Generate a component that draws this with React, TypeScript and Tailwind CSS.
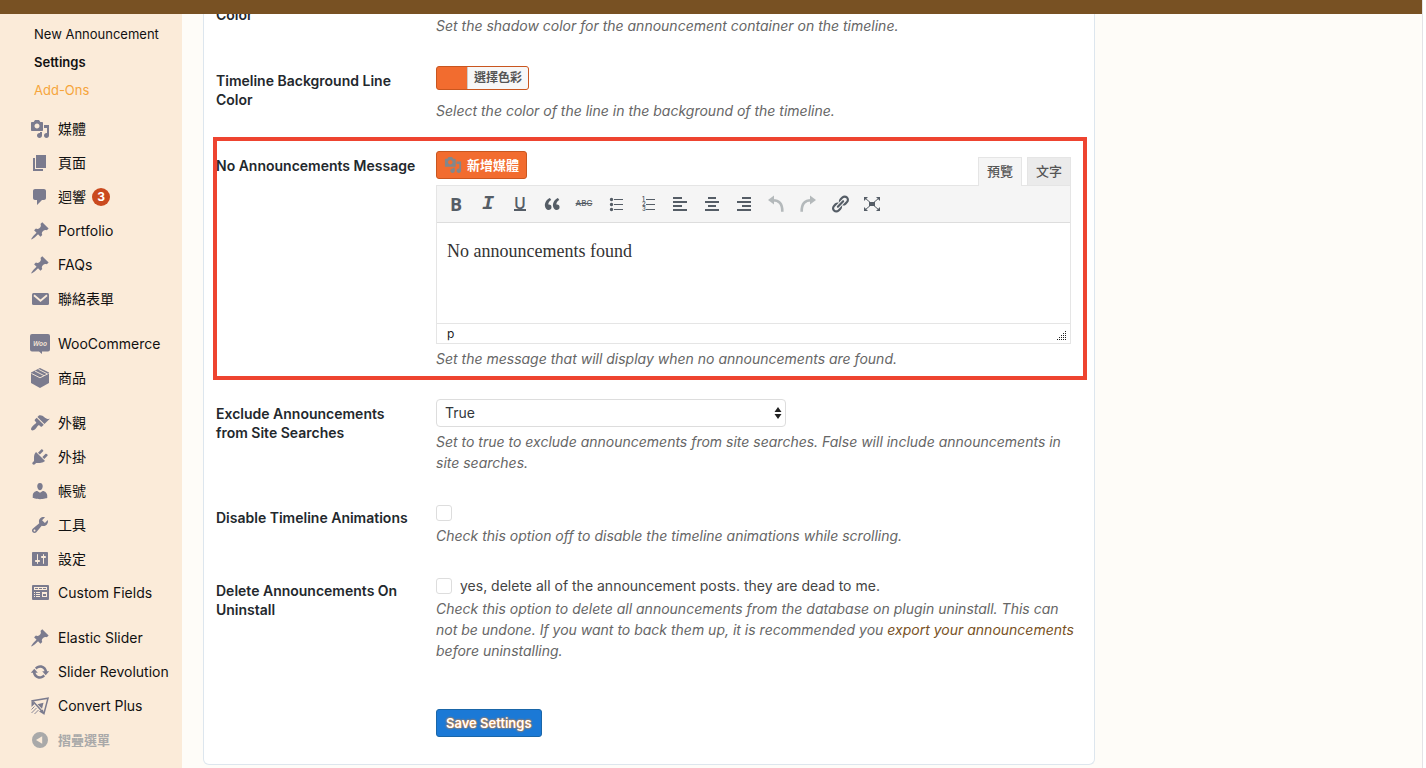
import { useState } from "react"
import type { ReactNode } from "react"

const icons = {
    media: "M13 11V4c0-.55-.45-1-1-1h-1.67L9 1H5L3.67 3H2c-.55 0-1 .45-1 1v7c0 .55.45 1 1 1h10c.55 0 1-.45 1-1zM7 4.5c1.38 0 2.5 1.12 2.5 2.5S8.38 9.5 7 9.5 4.5 8.38 4.5 7 5.62 4.5 7 4.5zM14 6h5v10.5c0 1.38-1.12 2.5-2.5 2.5S14 17.88 14 16.5s1.12-2.5 2.5-2.5c.17 0 .34.02.5.05V9h-3V6zm-4 8.05V13h2v3.5c0 1.38-1.12 2.5-2.5 2.5S7 17.88 7 16.5 8.12 14 9.5 14c.17 0 .34.02.5.05z",
    page: "M6 15V2h10v13H6zm-1 1h8v2H3V5h2v11z",
    comments: "M5 2h9c1.1 0 2 .9 2 2v7c0 1.1-.9 2-2 2h-2l-5 5v-5H5c-1.1 0-2-.9-2-2V4c0-1.1.9-2 2-2z",
    pin: "M10.44 3.02l1.82-1.82 6.36 6.35-1.83 1.82c-1.05-.68-2.48-.57-3.41.36l-.75.75c-.92.93-1.04 2.35-.35 3.41l-1.83 1.82-2.41-2.41-2.8 2.79c-.42.42-3.38 2.71-3.8 2.29s1.86-3.39 2.28-3.81l2.79-2.79L4.1 9.36l1.83-1.82c1.05.69 2.48.57 3.4-.36l.75-.75c.93-.92 1.05-2.35.36-3.41z",
    brush: "M14.48 11.06L7.41 3.99l1.5-1.5c.5-.56 2.3-.47 3.51.32 1.21.8 1.43 1.28 2.91 2.1 1.18.64 2.45 1.26 4.45.85zm-.71.71L6.7 4.7 4.93 6.47c-.39.39-.39 1.02 0 1.41l1.06 1.06c.39.39.39 1.03 0 1.42-.6.6-1.43 1.11-2.21 1.69-.35.26-.7.53-1.01.84C1.43 14.23.4 16.08 1.4 17.07c.99 1 2.84-.03 4.18-1.36.31-.31.58-.66.85-1.02.57-.78 1.08-1.61 1.69-2.21.39-.39 1.02-.39 1.41 0l1.06 1.06c.39.39 1.02.39 1.41 0z",
    plug: "M13.11 4.36L9.87 7.6 8 5.73l3.24-3.24c.35-.34 1.05-.2 1.56.32.52.51.66 1.21.31 1.55zm-8 1.77l.91-1.12 9.01 9.01-1.19.84c-.71.71-2.63 1.16-3.82 1.16H6.14L4.9 17.26c-.59.59-1.54.59-2.12 0-.59-.58-.59-1.53 0-2.12l1.24-1.24v-3.88c0-1.13.4-3.19 1.09-3.89zm7.26 3.97l3.24-3.24c.34-.35 1.04-.21 1.55.31.52.51.66 1.21.31 1.55l-3.24 3.25z",
    user: "M10 9.25c-2.27 0-2.73-3.44-2.73-3.44C7 4.02 7.82 2 9.97 2c2.16 0 2.98 2.02 2.71 3.81 0 0-.41 3.44-2.68 3.44zm0 2.57L12.72 10c2.39 0 4.52 2.33 4.52 4.53v2.49s-3.65 1.13-7.24 1.13c-3.65 0-7.24-1.13-7.24-1.13v-2.49c0-2.25 1.94-4.48 4.47-4.48z",
    wrench: "M16.68 9.77c-1.34 1.34-3.3 1.67-4.95.99l-5.41 6.52c-.99.99-2.59.99-3.58 0s-.99-2.59 0-3.57l6.52-5.42c-.68-1.65-.35-3.61.99-4.95 1.28-1.28 3.12-1.62 4.72-1.06l-2.89 2.89 2.82 2.82 2.86-2.87c.53 1.58.18 3.39-1.08 4.65zM3.81 16.21c.4.39 1.04.39 1.43 0 .4-.4.4-1.04 0-1.43-.39-.4-1.03-.4-1.43 0-.39.39-.39 1.03 0 1.43z",
    sliders: "M18 16V4c0-.55-.45-1-1-1H3c-.55 0-1 .45-1 1v12c0 .55.45 1 1 1h14c.55 0 1-.45 1-1zM8 11h1c.55 0 1 .45 1 1s-.45 1-1 1H8v1.5c0 .28-.22.5-.5.5s-.5-.22-.5-.5V13H6c-.55 0-1-.45-1-1s.45-1 1-1h1V5.5c0-.28.22-.5.5-.5s.5.22.5.5V11zm5-2h-1c-.55 0-1-.45-1-1s.45-1 1-1h1V5.5c0-.28.22-.5.5-.5s.5.22.5.5V7h1c.55 0 1 .45 1 1s-.45 1-1 1h-1v5.5c0 .28-.22.5-.5.5s-.5-.22-.5-.5V9z",
    update: "M10.2 3.28c3.53 0 6.43 2.61 6.92 6h2.08l-3.5 4-3.5-4h2.32c-.45-1.97-2.21-3.45-4.32-3.45-1.45 0-2.73.71-3.54 1.78L4.95 5.66C6.23 4.2 8.11 3.28 10.2 3.28zm-.4 13.44c-3.52 0-6.43-2.61-6.92-6H.8l3.5-4c1.17 1.33 2.33 2.67 3.5 4H5.48c.45 1.97 2.21 3.45 4.32 3.45 1.45 0 2.73-.71 3.54-1.78l1.71 1.95c-1.28 1.46-3.15 2.38-5.25 2.38z",
    quote: "M9.49 13.22c0-.74-.2-1.38-.61-1.9-.62-.78-1.83-.88-2.53-.72-.29-1.65 1.11-3.75 2.92-4.65L7.88 4c-2.73 1.3-5.42 4.28-4.96 8.05C3.21 14.43 4.59 16 6.54 16c.85 0 1.56-.25 2.12-.75s.83-1.18.83-2.03zm8.05 0c0-.74-.2-1.38-.61-1.9-.63-.78-1.83-.88-2.53-.72-.29-1.65 1.11-3.75 2.92-4.65L15.93 4c-2.73 1.3-5.41 4.28-4.95 8.05.29 2.38 1.66 3.95 3.61 3.95.85 0 1.56-.25 2.12-.75s.83-1.18.83-2.03z",
    link: "M17.74 2.76c1.68 1.69 1.68 4.41 0 6.1l-1.53 1.52c-1.12 1.12-2.7 1.47-4.14 1.09l2.62-2.61.76-.77.76-.76c.84-.84.84-2.2 0-3.04-.84-.85-2.2-.85-3.04 0l-.77.76-3.38 3.38c-.37-1.44-.02-3.02 1.1-4.14l1.52-1.53c1.69-1.68 4.42-1.68 6.1 0zM8.59 13.43l5.34-5.34c.42-.42.42-1.1 0-1.52-.44-.43-1.13-.39-1.53 0l-5.33 5.34c-.42.42-.42 1.1 0 1.52.44.43 1.13.39 1.52 0zm-.76 2.29l4.14-4.15c.38 1.44.03 3.02-1.09 4.14l-1.52 1.53c-1.69 1.68-4.41 1.68-6.1 0-1.68-1.68-1.68-4.42 0-6.1l1.53-1.52c1.12-1.12 2.7-1.47 4.14-1.1l-4.14 4.15c-.85.84-.85 2.2 0 3.05.84.84 2.2.84 3.04 0z",
    collapse: "M10 2a8 8 0 1 0 0 16 8 8 0 0 0 0-16zm2.2 4.2v7.6L6 10z",
    alignLeft: "M3 3h9v2H3zM3 7h14v2H3zM3 11h9v2H3zM3 15h14v2H3z",
    alignCenter: "M6 3h8v2H6zM3 7h14v2H3zM6 11h8v2H6zM3 15h14v2H3z",
    alignRight: "M8 3h9v2H8zM3 7h14v2H3zM8 11h9v2H8zM3 15h14v2H3z",
    list: "M5.500 3.800a1.700 1.700 0 1 1 0 3.400 1.700 1.700 0 0 1 0-3.400zM8 5h9v1H8zM5.500 8.800a1.700 1.700 0 1 1 0 3.400 1.700 1.700 0 0 1 0-3.400zM8 10h9v1H8zM5.500 13.800a1.700 1.700 0 1 1 0 3.400 1.700 1.700 0 0 1 0-3.400zM8 15h9v1H8z",
}

function Icon({ d, size = 20 }: { d: string; size?: number }) {
    return (
        <svg viewBox="0 0 20 20" width={size} height={size} fill="currentColor" className="shrink-0" aria-hidden="true">
            <path d={d} />
        </svg>
    )
}

function MailIcon() {
    return (
        <svg viewBox="0 0 20 20" width="20" height="20" className="shrink-0" aria-hidden="true">
            <rect x="2" y="4" width="17" height="12" rx="1.5" fill="currentColor" />
            <path d="M4 6.2l6.5 5.6L17 6.2" fill="none" stroke="#fbebd9" strokeWidth="1.8" />
        </svg>
    )
}

function WooIcon() {
    return (
        <svg viewBox="0 0 20 20" width="20" height="20" className="shrink-0" aria-hidden="true">
            <path d="M2 0h16a2 2 0 0 1 2 2v13.500a2 2 0 0 1-2 2h-6L12 20l-3-2.500H2a2 2 0 0 1-2-2V2a2 2 0 0 1 2-2z" fill="currentColor" />
            <text x="10" y="11.500" textAnchor="middle" fontSize="7" fontWeight="600" fontStyle="italic" fontFamily="Open Sans" fill="#fbebd9">Woo</text>
        </svg>
    )
}

function BoxIcon() {
    return (
        <svg viewBox="0 0 20 20" width="20" height="20" className="shrink-0" aria-hidden="true">
            <path d="M10 0l9 4.500V15l-9 5-9-5V4.500z" fill="currentColor" />
            <path d="M1.500 5.500L10 9.800l8.500-4.300M5 3l9 4.600M8.500 1.300l8.500 4.400" fill="none" stroke="#fbebd9" strokeWidth="0.900" />
        </svg>
    )
}

function FieldsIcon() {
    return (
        <svg viewBox="0 0 20 20" width="20" height="20" className="shrink-0" aria-hidden="true">
            <rect x="2" y="2" width="17" height="15" rx="1" fill="currentColor" />
            <path
                d="M4 4h13v3H4zM4 9h1v1H4zM6 9h4v1H6zM4 11h1v1H4zM6 11h4v1H6zM4 13h1v1H4zM6 13h4v1H6zM12 9h5v5h-5z"
                fill="#fbebd9"
            />
            <path d="M5 5h3v1H5zM9 5h3v1H9zM13 5h3v1h-3zM13 11h3v2h-3z" fill="currentColor" />
        </svg>
    )
}

function ConvertIcon() {
    return (
        <svg viewBox="0 0 20 20" width="20" height="20" fill="none" stroke="currentColor" className="shrink-0" aria-hidden="true">
            <path d="M2.500 4.800L18 2.200 14 17.500z" strokeWidth="1.500" />
            <path d="M7.500 8.200l6-1.500-1.500 6z" fill="currentColor" stroke="none" />
            <path d="M1.500 4.500v6.500l3-3zM9 15.500l5 3-1-5z" fill="currentColor" stroke="none" />
            <path d="M1.500 13.500l3-3M1.500 17l5-5M4.500 18l4-4" strokeWidth="0.900" />
        </svg>
    )
}

function HistoryIcon({ flip = false }: { flip?: boolean }) {
    return (
        <svg viewBox="0 0 20 20" width="20" height="20" className="text-[#b4b9bb]" aria-hidden="true">
            <g transform={flip ? "translate(20 0) scale(-1 1)" : undefined}>
                <path d="M2 6l6-4.500v9z" fill="currentColor" />
                <path d="M7 6.200c6 0 9.500 3.500 9.300 11.500" fill="none" stroke="currentColor" strokeWidth="2.600" />
            </g>
        </svg>
    )
}

function FullscreenIcon() {
    return (
        <svg viewBox="0 0 20 20" width="20" height="20" aria-hidden="true">
            <path d="M7 8h6v4H7zM2 3h4L2 7zM18 3v4l-4-4zM2 17v-4l4 4zM18 17h-4l4-4z" fill="currentColor" />
            <path d="M3 4l14 12M17 4L3 16" stroke="currentColor" strokeWidth="1" />
        </svg>
    )
}

function NumberedIcon() {
    return (
        <svg viewBox="0 0 20 20" width="20" height="20" fill="currentColor" aria-hidden="true">
            <path d="M8 5h9v1H8zM8 10h9v1H8zM8 15h9v1H8z" />
            <g fontSize="6" fontWeight="600" fontFamily="Inter">
                <text x="4" y="7">1</text>
                <text x="4" y="12">2</text>
                <text x="4" y="17">3</text>
            </g>
        </svg>
    )
}

const menuGroups: { label: string; icon: ReactNode; count?: number }[][] = [
    [
        { label: "媒體", icon: <Icon d={icons.media} /> },
        { label: "頁面", icon: <Icon d={icons.page} /> },
        { label: "迴響", icon: <Icon d={icons.comments} />, count: 3 },
        { label: "Portfolio", icon: <Icon d={icons.pin} /> },
        { label: "FAQs", icon: <Icon d={icons.pin} /> },
        { label: "聯絡表單", icon: <MailIcon /> },
    ],
    [
        { label: "WooCommerce", icon: <WooIcon /> },
        { label: "商品", icon: <BoxIcon /> },
    ],
    [
        { label: "外觀", icon: <Icon d={icons.brush} /> },
        { label: "外掛", icon: <Icon d={icons.plug} /> },
        { label: "帳號", icon: <Icon d={icons.user} /> },
        { label: "工具", icon: <Icon d={icons.wrench} /> },
        { label: "設定", icon: <Icon d={icons.sliders} /> },
        { label: "Custom Fields", icon: <FieldsIcon /> },
    ],
    [
        { label: "Elastic Slider", icon: <Icon d={icons.pin} /> },
        { label: "Slider Revolution", icon: <Icon d={icons.update} /> },
        { label: "Convert Plus", icon: <ConvertIcon /> },
    ],
]

const tools: { name: string; icon: ReactNode }[] = [
    { name: "Bold", icon: <span className="font-['Open_Sans'] text-lg font-bold">B</span> },
    { name: "Italic", icon: <span className="font-['Liberation_Mono'] text-xl font-bold italic">I</span> },
    { name: "Underline", icon: <span className="border-b-2 font-['Open_Sans'] text-base leading-3 font-semibold">U</span> },
    { name: "Blockquote", icon: <Icon d={icons.quote} /> },
    { name: "Strikethrough", icon: <span className="text-[8px] font-medium line-through">ABC</span> },
    { name: "Bulleted list", icon: <Icon d={icons.list} /> },
    { name: "Numbered list", icon: <NumberedIcon /> },
    { name: "Align left", icon: <Icon d={icons.alignLeft} /> },
    { name: "Align center", icon: <Icon d={icons.alignCenter} /> },
    { name: "Align right", icon: <Icon d={icons.alignRight} /> },
    { name: "Undo", icon: <HistoryIcon /> },
    { name: "Redo", icon: <HistoryIcon flip /> },
    { name: "Insert link", icon: <Icon d={icons.link} /> },
    { name: "Fullscreen", icon: <FullscreenIcon /> },
]

function Sidebar() {
    return (
        <nav className="w-[182px] shrink-0 bg-[#fbebd9] pt-5 text-sm text-[#111]">
            <ul className="mb-2 pl-[34px] text-[13px]">
                <li><a href="#new" className="block leading-7">New Announcement</a></li>
                <li><a href="#settings" className="block leading-7 font-semibold">Settings</a></li>
                <li><a href="#addons" className="block leading-7 text-[#f6a53b]">Add-Ons</a></li>
            </ul>
            {menuGroups.map((group, index) => (
                <ul key={index} className="mb-[11px] last-of-type:mb-0">
                    {group.map((item) => (
                        <li key={item.label}>
                            <a href="#menu" className="flex h-[34px] items-center gap-2 pl-[30px] whitespace-nowrap">
                                <span className="text-[#7b7b8e]">{item.icon}</span>
                                {item.label}
                                {item.count && (
                                    <span className="-ml-0.5 flex size-[18px] items-center justify-center rounded-full bg-[#ca4a1f] text-xs font-bold text-white">
                                        {item.count}
                                    </span>
                                )}
                            </a>
                        </li>
                    ))}
                </ul>
            ))}
            <button type="button" className="flex h-[34px] items-center gap-2 pl-[30px] text-[13px] font-bold text-[#a9a9a9]">
                <Icon d={icons.collapse} />
                摺疊選單
            </button>
        </nav>
    )
}

function Row({ label, htmlFor, marked, children }: { label: string; htmlFor: string; marked?: boolean; children: ReactNode }) {
    return (
        <div className="relative flex gap-5">
            <label htmlFor={htmlFor} className="w-[200px] shrink-0 py-5 leading-[19px] font-semibold text-[#23282d]">
                {label}
            </label>
            <div className="min-w-0 flex-1 py-[15px]">{children}</div>
            {marked && <div className="pointer-events-none absolute top-px -right-4 bottom-1 -left-[3px] border-4 border-[#ee4430]" />}
        </div>
    )
}

function Description({ children }: { children: ReactNode }) {
    return <p className="-mr-2 leading-[21px] text-[#666] italic">{children}</p>
}

function Editor() {
    const [message, setMessage] = useState("No announcements found")

    return (
        <div className="mb-1">
            <div className="flex h-[34px] items-end justify-between">
                <button type="button" className="flex h-7 items-center gap-[5px] self-start rounded-[3px] border border-[#c9561f] bg-[#f26c2f] px-[7px] text-[13px] font-bold text-white">
                    <span className="text-[#82878c]"><Icon d={icons.media} size={18} /></span>
                    新增媒體
                </button>
                <div className="flex items-end gap-[5px] text-[13px] font-medium text-[#555]">
                    <button type="button" className="relative -mb-px h-[29px] w-11 border border-b-0 border-[#e5e5e5] bg-[#f5f5f5] pb-0.5">預覽</button>
                    <button type="button" className="h-7 w-11 border border-b-0 border-[#e5e5e5] bg-[#ebebeb]">文字</button>
                </div>
            </div>
            <div className="border border-[#e5e5e5]">
                <div className="flex h-[37px] items-center gap-1 border-b border-[#ddd] bg-[#f5f5f5] pl-[5px] text-[#555d66]">
                    {tools.map((tool) => (
                        <button key={tool.name} type="button" aria-label={tool.name} className="flex size-7 items-center justify-center">
                            {tool.icon}
                        </button>
                    ))}
                </div>
                <textarea
                    id="message"
                    value={message}
                    onChange={(e) => setMessage(e.target.value)}
                    className="block h-[100px] w-full resize-none px-[10px] py-4 font-['Liberation_Serif',serif] text-lg leading-6 text-[#333] outline-none"
                />
                <div className="flex h-5 items-center justify-between border-t border-[#e5e5e5] pr-[3px] pl-[10px] text-xs text-[#222]">
                    p
                    <svg viewBox="0 0 10 10" width="10" height="10" className="mb-0.5 self-end" fill="#222" aria-hidden="true">
                        <path d="M8 0h1v1H8zM6 2h1v1H6zM8 2h1v1H8zM4 4h1v1H4zM6 4h1v1H6zM8 4h1v1H8zM2 6h1v1H2zM4 6h1v1H4zM6 6h1v1H6zM8 6h1v1H8zM0 8h1v1H0zM2 8h1v1H2zM4 8h1v1H4zM6 8h1v1H6zM8 8h1v1H8z" />
                    </svg>
                </div>
            </div>
        </div>
    )
}

const checkboxStyle = "size-4 appearance-none rounded-[3px] border border-[#ddd] bg-white checked:bg-[#f26c2f]"

export default function App() {
    return (
        <div className="mr-[3px] flex min-h-screen border-r border-[#e4e2e6] bg-[#fefcf8] font-[Inter,'Noto_Sans_CJK_TC',sans-serif] text-sm">
            <header className="fixed top-0 right-1 left-0 z-10 h-[14px] bg-[#785123]" />
            <Sidebar />
            <main className="min-w-0 flex-1 pr-5 pl-[21px]">
                <form className="max-w-[892px] rounded-b-md border border-t-0 border-[#dde6ee] bg-white pr-[23px] pb-[27px] pl-3">
                    <div className="flex gap-5">
                        <span className="w-[200px] shrink-0 pt-[5px] leading-[19px] font-semibold text-[#23282d]">Color</span>
                        <div className="flex-1 py-[15px]">
                            <Description>Set the shadow color for the announcement container on the timeline.</Description>
                        </div>
                    </div>
                    <Row label="Timeline Background Line Color" htmlFor="line-color">
                        <button id="line-color" type="button" className="mb-[10px] flex h-6 overflow-hidden rounded-[3px] border border-[#c9561f] bg-[#f26c2f] pl-[30px] text-xs">
                            <span className="border-l border-[#ccc] bg-[#f7f7f7] px-[6px] leading-[22px] font-bold text-[#555]">選擇色彩</span>
                        </button>
                        <Description>Select the color of the line in the background of the timeline.</Description>
                    </Row>
                    <Row label="No Announcements Message" htmlFor="message" marked>
                        <Editor />
                        <Description>Set the message that will display when no announcements are found.</Description>
                    </Row>
                    <Row label="Exclude Announcements from Site Searches" htmlFor="exclude">
                        <div className="relative mb-1 w-[350px]">
                            <select id="exclude" defaultValue="True" className="block h-7 w-full appearance-none rounded-[4px] border border-[#ddd] bg-white px-2 text-[#32373c]">
                                <option>True</option>
                                <option>False</option>
                            </select>
                            <svg viewBox="0 0 8 12" width="8" height="12" className="pointer-events-none absolute top-2 right-1" fill="#222" aria-hidden="true">
                                <path d="M4 0l3.500 5h-7zM4 12L.5 7h7z" />
                            </svg>
                        </div>
                        <Description>
                            Set to true to exclude announcements from site searches. False will include announcements in site searches.
                        </Description>
                    </Row>
                    <Row label="Disable Timeline Animations" htmlFor="animations">
                        <div className="mb-0.5 flex h-5 items-center">
                            <input id="animations" type="checkbox" className={checkboxStyle} />
                        </div>
                        <Description>Check this option off to disable the timeline animations while scrolling.</Description>
                    </Row>
                    <Row label="Delete Announcements On Uninstall" htmlFor="uninstall">
                        <label className="mb-0.5 flex h-5 items-center gap-2 text-[#444]">
                            <input id="uninstall" type="checkbox" className={checkboxStyle} />
                            yes, delete all of the announcement posts. they are dead to me.
                        </label>
                        <Description>
                            Check this option to delete all announcements from the database on plugin uninstall. This can not be undone. If
                            you want to back them up, it is recommended you{" "}
                            <a href="#export" className="text-[#785123]">export your announcements</a> before uninstalling.
                        </Description>
                    </Row>
                    <button
                        type="submit"
                        className="mt-[33px] ml-[220px] block h-7 rounded-[3px] border border-[#1a66a8] bg-[#1b79d6] px-[9px] text-[13px] font-semibold text-white [text-shadow:0_0_2px_#f58220,0_0_2px_#f58220]"
                    >
                        Save Settings
                    </button>
                </form>
            </main>
        </div>
    )
}
